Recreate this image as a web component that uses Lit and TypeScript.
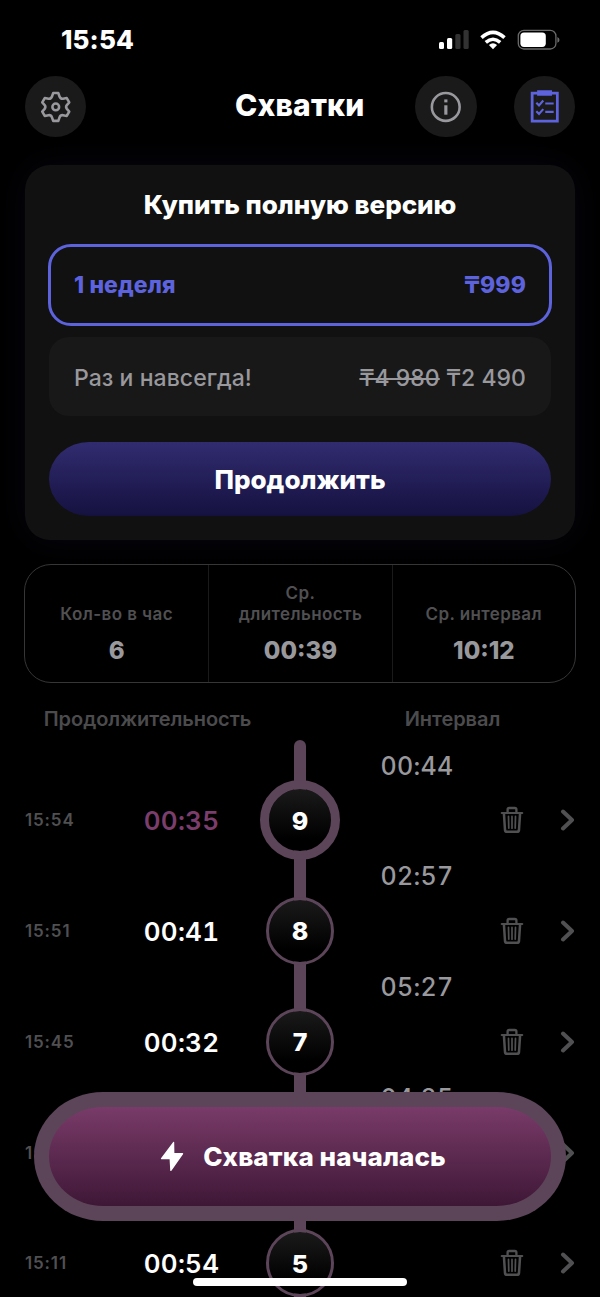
import { LitElement, html, css, svg } from "lit";
import { customElement, property } from "lit/decorators.js";

interface Contraction {
  n: number;
  time: string;
  duration: string;
  interval: string;
  active?: boolean;
}

const ITEMS: Contraction[] = [
  { n: 9, time: "15:54", duration: "00:35", interval: "00:44", active: true },
  { n: 8, time: "15:51", duration: "00:41", interval: "02:57" },
  { n: 7, time: "15:45", duration: "00:32", interval: "05:27" },
  { n: 6, time: "15:18", duration: "00:38", interval: "04:25" },
  { n: 5, time: "15:11", duration: "00:54", interval: "06:12" },
];

const trash = svg`<g fill="none" stroke="currentColor" stroke-linecap="round" stroke-linejoin="round">
  <path d="M1.8 7H22.2" stroke-width="2.2"/>
  <path d="M7.6 6.6V3.6Q7.6 2 9.2 2H14.8Q16.4 2 16.4 3.6V6.6" stroke-width="2.3"/>
  <path d="M3.9 7.2L5 24Q5.2 25.8 7 25.8H17Q18.8 25.8 19 24L20.1 7.2" stroke-width="2.5"/>
  <path d="M8.5 10.4L8.8 22.2M12 10.4V22.2M15.5 10.4L15.2 22.2" stroke-width="1.7"/></g>`;

@customElement("contraction-row")
export class ContractionRow extends LitElement {
  @property({ attribute: false }) item!: Contraction;

  static styles = css`
    :host { display: block; height: 110.75px; }
    .interval { height: 41px; display: grid; grid-template-columns: 337px 110px; align-items: center; }
    .gap { grid-column: 2; text-align: center; font-size: 25px; font-weight: 500; font-variant-numeric: tabular-nums; letter-spacing: 0.3px; color: #98989d; line-height: 30px; padding-top: 1px; }
    .row { height: 69.75px; display: grid; grid-template-columns: 100px 113px 124px 213px; align-items: center; }
    .time { font-size: 17px; font-weight: 600; color: #505052; letter-spacing: 0.85px; }
    .duration { text-align: center; font-size: 26px; font-weight: 600; font-variant-numeric: tabular-nums; letter-spacing: 0.25px; color: #fff; padding-top: 0.5px; }
    .duration.active { color: #7b3d6c; }
    .node { justify-self: center; box-sizing: border-box; width: 68px; height: 68px; border-radius: 50%; border: 3px solid #5c4459; background: linear-gradient(#1a1a1a, #000 80%) padding-box; display: flex; align-items: center; justify-content: center; font-size: 25px; font-weight: 800; color: #fff; position: relative; padding-top: 0.5px; }
    .node.active { width: 80px; height: 80px; border-width: 9px; margin: -6px 0; }
    .actions { display: flex; justify-content: flex-end; align-items: center; color: #505052; }
    .trash { width: 24px; height: 28px; margin-right: 36px; }
    .chevron { width: 15px; height: 22px; }
  `;

  render() {
    const i = this.item;
    const active = i.active ? "active" : "";
    return html`
      <div class="interval"><span class="gap">${i.interval}</span></div>
      <div class="row">
        <span class="time">${i.time}</span>
        <span class="duration ${active}">${i.duration}</span>
        <span class="node ${active}">${i.n}</span>
        <span class="actions">
          <svg class="trash" viewBox="0 0 24 28">${trash}</svg>
          <svg class="chevron" viewBox="0 0 15 22"><path d="M3 2.5L12 11L3 19.5" fill="none" stroke="currentColor" stroke-width="4" stroke-linecap="round" stroke-linejoin="round"/></svg>
        </span>
      </div>`;
  }
}

@customElement("app-root")
export class AppRoot extends LitElement {
  static styles = css`
    :host { display: block; position: relative; width: 600px; height: 1297px; overflow: hidden; background: #000; color: #fff; font-family: Inter, "Noto Sans", sans-serif; }
    .status { height: 75px; box-sizing: border-box; padding: 24px 40px 0 61px; display: flex; justify-content: space-between; align-items: flex-start; }
    .clock { font-size: 26px; font-weight: 800; line-height: 32px; letter-spacing: 0.1px; }
    .status-icons { width: 122px; height: 22px; margin-top: 5px; }
    .header { height: 62px; padding: 0 25px 0 24.5px; display: grid; grid-template-columns: 160px 1fr 160px; align-items: center; }
    .title { text-align: center; font-size: 30px; font-weight: 800; line-height: 60px; padding-bottom: 3px; letter-spacing: 0.2px; }
    .buttons { display: flex; justify-content: space-between; }
    .round { width: 61.5px; height: 61.5px; border-radius: 50%; background: #1a1a1a; display: block; }
    .offer { margin: 28px 25px 0; height: 375px; box-sizing: border-box; padding: 24px 24px 25px; border-radius: 25px; background: #111; box-shadow: 0 0 36px rgba(70, 70, 170, 0.1); display: flex; flex-direction: column; }
    .offer-title { text-align: center; font-size: 26px; font-weight: 800; line-height: 32px; height: 55px; letter-spacing: -0.05px; }
    .plan { height: 80px; box-sizing: border-box; border-radius: 20px; padding: 0 25px; display: flex; justify-content: space-between; align-items: center; font-size: 23px; }
    .plan.selected { height: 82px; margin: 0 -1px; border: 3px solid #5d62dd; padding: 1px 23px 0; border-radius: 23px; font-weight: 800; color: #5d62dd; letter-spacing: 0.1px; }
    .plan.other { margin: 11px 0 25px; padding-top: 3px; background: #181818; color: #98989d; font-weight: 500; letter-spacing: 0.05px; }
    .old { text-decoration: line-through; text-decoration-thickness: 2px; }
    .continue { height: 74px; border-radius: 40px / 37px; background: linear-gradient(#312c70, #15113f); display: flex; align-items: center; justify-content: center; font-size: 26px; font-weight: 800; position: relative; top: 1px; }
    .stats { margin: 24px 24px 0; height: 119px; box-sizing: border-box; border: 1.5px solid #363638; border-radius: 27px; background: #000; display: grid; grid-template-columns: repeat(3, 1fr); position: relative; }
    .stat { display: flex; flex-direction: column; justify-content: flex-end; align-items: center; padding-bottom: 16px; text-align: center; }
    .stat + .stat { border-left: 1.5px solid #1a1a1b; }
    .stat-label { font-size: 17px; line-height: 21px; font-weight: 600; color: #505052; letter-spacing: 0.4px; }
    .stat-value { font-size: 24px; line-height: 30px; font-weight: 800; color: #98989d; margin-top: 11px; }
    .columns { height: 57px; padding: 0 25px; display: grid; grid-template-columns: 245px 60px 245px; align-items: center; box-sizing: border-box; padding-top: 14px; text-align: center; font-size: 20px; font-weight: 600; color: #4b4b4d; letter-spacing: -0.05px; }
    .list { position: relative; padding: 4.5px 25px 0; }
    .line { position: absolute; left: 294px; top: 0; width: 12px; height: 700px; border-radius: 6px; background: #5c4459; }
    .start { position: absolute; left: 34px; top: 1092px; width: 532px; height: 129px; box-sizing: border-box; border-radius: 69px / 64.5px; background: #5c4459; padding: 15px; }
    .start-inner { height: 99px; box-sizing: border-box; padding-left: 6px; border-radius: 54px / 49.5px; background: linear-gradient(#793b69, #3e1736); display: flex; align-items: center; justify-content: center; font-size: 26px; font-weight: 800; letter-spacing: 0.1px; }
    .bolt { width: 24px; height: 31px; margin-right: 19px; }
    .home { position: absolute; left: 193px; top: 1278px; width: 214px; height: 8px; border-radius: 4px; background: #fff; }
  `;

  render() {
    return html`
      <div class="status">
        <span class="clock">15:54</span>
        <svg class="status-icons" viewBox="438 29 122 22">
          <g fill="#fff">
            <rect x="439" y="42" width="5" height="7" rx="1.5"/><rect x="447" y="38" width="5.2" height="11" rx="1.5"/>
            <g fill="#323232"><rect x="455.3" y="34" width="5.2" height="15" rx="1.5"/><rect x="463.5" y="30" width="5.2" height="19" rx="1.5"/></g>
            <path d="M493 49.2L488.9 45Q493 41.6 497.1 45Z"/>
          </g>
          <g fill="none" stroke="#fff" stroke-width="3.6"><path d="M485.8 42.4Q493 36.1 500.2 42.4"/><path d="M481.5 37.7Q493 27.2 504.5 37.7"/></g>
          <rect x="518.3" y="30.4" width="37.6" height="18.6" rx="5.6" fill="none" stroke="#6a6a6a" stroke-width="1.3"/>
          <rect x="520.4" y="32.5" width="25.4" height="14.4" rx="3.6" fill="#fff"/>
          <path d="M557.4 37V42.8Q559.5 41.8 559.5 39.9Q559.5 38 557.4 37Z" fill="#6a6a6a"/>
        </svg>
      </div>
      <div class="header">
        <svg class="round" viewBox="0 0 62 62"><g fill="none" stroke="#98989d" stroke-width="2.6" stroke-linejoin="round">
          <path d="M28.4 17.2H33.6L34.8 20.7Q35.7 23.2 38.3 22.9L42.1 22.2L44.6 26.6L42.2 29.3Q40.7 31.2 42.2 33.1L44.6 35.9L42.1 40.3L38.3 39.5Q35.7 39.2 34.8 41.7L33.6 45.2H28.4L27.2 41.7Q26.3 39.2 23.7 39.5L19.9 40.3L17.4 35.9L19.8 33.1Q21.3 31.2 19.8 29.3L17.4 26.6L19.9 22.2L23.7 22.9Q26.3 23.2 27.2 20.7Z"/>
          <circle cx="31" cy="31.2" r="3.4"/></g></svg>
        <span class="title">Схватки</span>
        <span class="buttons">
          <svg class="round" viewBox="0 0 62 62"><circle cx="31" cy="31.2" r="14" fill="none" stroke="#98989d" stroke-width="2.6"/><rect x="29.5" y="23.6" width="3.2" height="3" fill="#98989d"/><rect x="29.5" y="29.5" width="3.2" height="9.5" fill="#98989d"/></svg>
          <svg class="round" viewBox="0 0 62 62"><g fill="none" stroke="#5d62dd" stroke-width="2.8">
            <rect x="18.3" y="17.3" width="25.4" height="28.2"/><path d="M23.3 17.2H38.3" stroke-width="5.6"/>
            <path d="M31.5 27.7H40M31.5 36.2H40M22.5 27L25.2 29.6L29.5 24.8M22.5 35.6L25.2 38.2L29.5 33.4" stroke-width="2.2"/></g></svg>
        </span>
      </div>
      <div class="offer">
        <div class="offer-title">Купить полную версию</div>
        <div class="plan selected"><span>1 неделя</span><span>₸999</span></div>
        <div class="plan other"><span>Раз и навсегда!</span><span><span class="old">₸4 980</span> ₸2 490</span></div>
        <div class="continue">Продолжить</div>
      </div>
      <div class="stats">
        <div class="stat"><span class="stat-label">Кол-во в час</span><span class="stat-value">6</span></div>
        <div class="stat"><span class="stat-label">Ср.<br>длительность</span><span class="stat-value">00:39</span></div>
        <div class="stat"><span class="stat-label">Ср. интервал</span><span class="stat-value">10:12</span></div>
      </div>
      <div class="columns"><span>Продолжительность</span><span></span><span>Интервал</span></div>
      <div class="list">
        <div class="line"></div>
        ${ITEMS.map((i) => html`<contraction-row .item=${i}></contraction-row>`)}
      </div>
      <div class="start"><div class="start-inner">
        <svg class="bolt" viewBox="0 0 24 31"><path d="M13.2 1L1 17.2Q.4 18.3 1.6 18.3H9.6L10.2 29.2Q10.4 30.8 11.6 29.6L23 13.2Q23.7 12 22.4 12H14.4L14.2 1.3Q14 .2 13.2 1Z" fill="#fff"/></svg>
        <span class="start-label">Схватка началась</span></div></div>
      <div class="home"></div>`;
  }
}
